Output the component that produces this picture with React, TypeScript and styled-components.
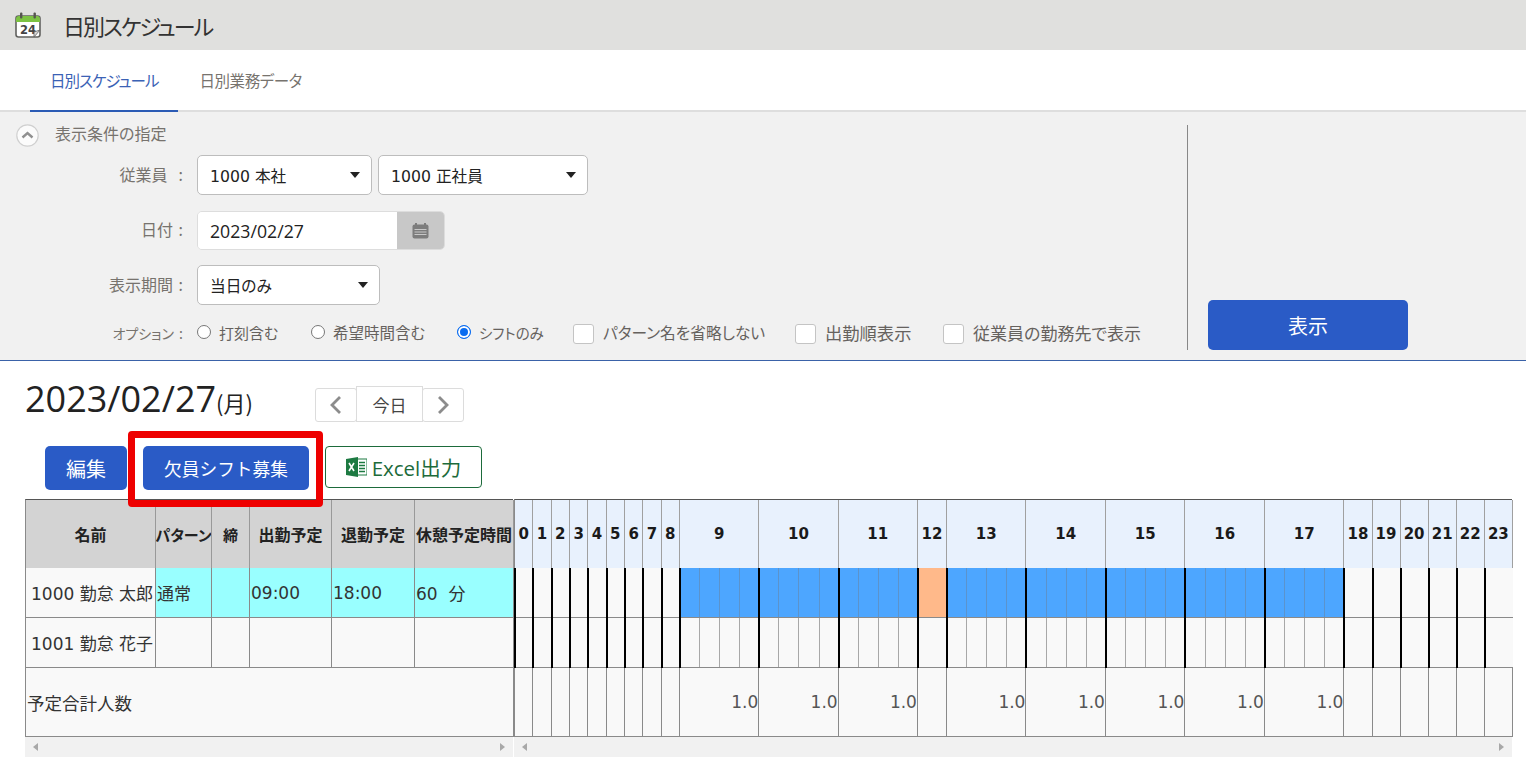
import React from "react";
import styled, { createGlobalStyle } from "styled-components";

const CJK = `"Noto Sans CJK JP", "Noto Sans", sans-serif`;
const UI = `"Open Sans", ${CJK}`;
const WIDE = `"DejaVu Sans", ${CJK}`;

const Global = createGlobalStyle`
  * { box-sizing: border-box; }
  html, body { margin: 0; padding: 0; background: #fff; overflow: hidden; }
  body { font-family: ${UI}; font-feature-settings: "palt"; color: #222; width: 1526px; height: 765px; }
`;

const Page = styled.div`
  width: 1526px;
  height: 765px;
  overflow: hidden;
`;

const TitleBar = styled.header`
  height: 50px;
  background: #e0e0de;
  display: flex;
  align-items: center;
  padding-left: 15px;
  gap: 22px;
`;
const PageTitle = styled.h1`
  margin: 0;
  font-size: 22px;
  font-weight: 400;
  color: #333;
  font-family: ${CJK};
  letter-spacing: -2px;
`;

const Tabs = styled.nav`
  height: 62px;
  display: flex;
  padding-left: 30px;
  border-bottom: 2px solid #dedede;
`;
const Tab = styled.div<{ $active?: boolean }>`
  height: 62px;
  padding: 0 ${(p) => (p.$active ? 20 : 21)}px;
  display: flex;
  align-items: center;
  font-size: 15.5px;
  font-family: ${CJK};
  letter-spacing: ${(p) => (p.$active ? "-1px" : "-0.4px")};
  color: ${(p) => (p.$active ? "#3b62b5" : "#77736e")};
  border-bottom: 2px solid ${(p) => (p.$active ? "#2b5bb5" : "transparent")};
`;

const Panel = styled.section`
  height: 249px;
  background: #f1f1f1;
  border-bottom: 1px solid #3a62a8;
  display: flex;
`;
const Form = styled.div`
  width: 1187px;
  padding-top: 12px;
  display: flex;
  flex-direction: column;
`;
const Side = styled.div`
  margin: 13px 0 10px;
  border-left: 1px solid #888;
  padding-left: 20px;
  display: flex;
  align-items: flex-end;
`;
const ShowButton = styled.button`
  width: 200px;
  height: 50px;
  border: none;
  border-radius: 5px;
  background: #2a5bc6;
  color: #fff;
  font-size: 20px;
  font-family: ${CJK};
  padding: 0;
`;
const FoldRow = styled.div`
  height: 23px;
  display: flex;
  align-items: center;
  padding-left: 16px;
  gap: 16px;
  font-size: 16px;
  font-family: ${CJK};
  color: #77736e;
  margin-bottom: 8px;
`;
const FoldText = styled.span`
  padding-bottom: 5px;
`;
const FieldRow = styled.div<{ $h: number; $mb: number }>`
  height: ${(p) => p.$h}px;
  margin-bottom: ${(p) => p.$mb}px;
  display: flex;
  align-items: center;
  gap: 6px;
`;
const FieldLabel = styled.div`
  width: 191px;
  padding: 0 8px 3px 0;
  text-align: right;
  font-size: 16px;
  font-family: ${CJK};
  color: #77736e;
  white-space: pre;
  word-spacing: 2px;
`;
const SelectBox = styled.div<{ $w: number }>`
  width: ${(p) => p.$w}px;
  height: 40px;
  background: #fff;
  border: 1px solid #bdbdbd;
  border-radius: 5px;
  display: flex;
  align-items: center;
  justify-content: space-between;
  padding: 0 11px 0 12px;
  font-size: 15.7px;
  font-family: ${WIDE};
  color: #222;
`;
const Caret = styled.span`
  width: 0;
  height: 0;
  border-left: 5px solid transparent;
  border-right: 5px solid transparent;
  border-top: 6px solid #222;
`;
const DateField = styled.div`
  width: 248px;
  height: 39px;
  display: flex;
  border: 1px solid #ddd;
  border-radius: 5px;
  overflow: hidden;
`;
const DateInput = styled.div`
  flex: 1;
  background: #fff;
  display: flex;
  align-items: center;
  padding-left: 12px;
  font-size: 17.7px;
  color: #222;
`;
const DateButton = styled.div`
  width: 47px;
  background: #c8c8c8;
  display: flex;
  align-items: center;
  justify-content: center;
`;
const Options = styled.div`
  display: flex;
  align-items: center;
  height: 24px;
`;
const OptionLabel = styled(FieldLabel)`
  width: 197px;
  padding-right: 14px;
  font-size: 14px;
`;
const Option = styled.div<{ $w: number; $fs?: number }>`
  width: ${(p) => p.$w}px;
  display: flex;
  align-items: center;
  font-size: ${(p) => p.$fs ?? 15.5}px;
  font-family: ${CJK};
  color: #66625e;
  white-space: nowrap;
`;
const OptionText = styled.span`
  padding-bottom: 4px;
`;
const RadioMark = styled.span<{ $on?: boolean }>`
  width: 14px;
  height: 14px;
  border-radius: 50%;
  margin: -5px 8px 0 0;
  flex: none;
  background: ${(p) => (p.$on ? "#0a6cf0" : "#fff")};
  border: 1px solid ${(p) => (p.$on ? "#0a6cf0" : "#777")};
  box-shadow: ${(p) => (p.$on ? "inset 0 0 0 2px #fff" : "none")};
`;
const CheckMark = styled.span`
  width: 21px;
  height: 20px;
  margin-right: 9px;
  flex: none;
  background: #fff;
  border: 1px solid #c4c4c4;
  border-radius: 3px;
`;

const DateRow = styled.div`
  margin: 25px 0 24px 25px;
  height: 36px;
  display: flex;
  align-items: center;
`;
const BigDate = styled.div`
  width: 290px;
  font-size: 36px;
  line-height: 36px;
  color: #222;
  white-space: nowrap;
  padding-bottom: 7px;
`;
const Weekday = styled.span`
  font-size: 22px;
  font-family: ${CJK};
`;
const Pager = styled.div`
  display: flex;
  align-items: flex-end;
  height: 36px;
`;
const PagerArrow = styled.div`
  width: 42px;
  height: 34px;
  background: #fff;
  border: 1px solid #dcdcdc;
  border-radius: 3px;
  display: flex;
  align-items: center;
  justify-content: center;
`;
const PagerToday = styled.div`
  width: 67px;
  height: 36px;
  margin: 0 -1px;
  background: #fff;
  border: 1px solid #dcdcdc;
  display: flex;
  align-items: center;
  justify-content: center;
  font-size: 17px;
  font-family: ${CJK};
  color: #444;
`;

const ActionBar = styled.div`
  position: relative;
  height: 44px;
  padding-left: 45px;
  display: flex;
  gap: 16px;
`;
const BlueButton = styled.button<{ $w: number; $fs: number }>`
  width: ${(p) => p.$w}px;
  height: 44px;
  border: none;
  border-radius: 5px;
  background: #2a5bc6;
  color: #fff;
  font-size: ${(p) => p.$fs}px;
  font-family: ${CJK};
  padding: 0;
`;
const ExcelButton = styled.button`
  width: 157px;
  height: 42px;
  border: 1px solid #1d6b3b;
  border-radius: 4px;
  background: #fff;
  color: #1d6b3b;
  font-size: 20.5px;
  font-family: ${UI};
  display: flex;
  align-items: center;
  justify-content: center;
  gap: 5px;
  padding: 0;
`;
const Highlight = styled.div`
  position: absolute;
  left: 128px;
  top: -15px;
  width: 195px;
  height: 76px;
  border: 7px solid #ee0000;
  border-radius: 4px;
  z-index: 3;
`;

const TableArea = styled.div`
  margin-top: 9px;
  padding-left: 25px;
  display: flex;
  gap: 1px;
`;
const Pane = styled.div<{ $w: number }>`
  width: ${(p) => p.$w}px;
`;
const LeftGrid = styled.div`
  display: grid;
  grid-template-columns: 130px 56px 38px 82px 83px 99px;
  grid-template-rows: 68px 50px 50px 69px;
  border-top: 1px solid #555;
  border-left: 1px solid #8a8a8a;
`;
const HeadCell = styled.div<{ $fs?: number }>`
  background: #d3d3d3;
  border-right: 1px solid #999;
  display: flex;
  align-items: center;
  justify-content: center;
  font-size: ${(p) => p.$fs ?? 16}px;
  font-weight: 700;
  font-family: ${CJK};
  color: #222;
  white-space: nowrap;
  overflow: hidden;
`;
const BodyCell = styled.div<{ $cyan?: boolean; $pad?: number }>`
  background: ${(p) => (p.$cyan ? "#99ffff" : "#f9f9f9")};
  border-right: 1px solid #8a8a8a;
  border-bottom: 1px solid #8a8a8a;
  display: flex;
  align-items: center;
  padding-left: ${(p) => p.$pad ?? 1}px;
  font-size: 17px;
  font-family: ${WIDE};
  color: #333;
  white-space: nowrap;
  overflow: hidden;
`;
const TotalCell = styled(BodyCell)`
  grid-column: 1 / -1;
  font-size: 17.5px;
`;

const TIMELINE_COLS =
  "repeat(9, 18.33px) repeat(3, 79.34px) 29px repeat(5, 79.5px) repeat(6, 28.08px)";
const TimeGrid = styled.div`
  display: grid;
  grid-template-columns: ${TIMELINE_COLS};
  grid-template-rows: 68px 50px 50px 69px;
  border-top: 1px solid #555;
  border-left: 1px solid #8a8a8a;
`;
const HourHead = styled.div`
  background: #e8f1fd;
  border-right: 1px solid #a0a0a0;
  display: flex;
  align-items: center;
  justify-content: center;
  font-size: 15px;
  font-weight: 700;
  font-family: "DejaVu Sans", sans-serif;
  color: #1a1a1a;
`;
const HourCell = styled.div<{ $fill?: "work" | "break" }>`
  position: relative;
  background: ${(p) => (p.$fill === "work" ? "#4da6ff" : p.$fill === "break" ? "#ffb98a" : "#f9f9f9")};
  border-bottom: 1px solid #8a8a8a;
  display: flex;
  &::before {
    content: "";
    position: absolute;
    left: -1px;
    top: 0;
    bottom: -1px;
    width: 2px;
    background: #000;
    z-index: 1;
  }
`;
const Quarter = styled.span<{ $fill?: boolean }>`
  flex: 1;
  border-right: 1px solid ${(p) => (p.$fill ? "#5b93cc" : "#a8a8a8")};
  &:last-child {
    border-right: none;
  }
`;
const TotalHour = styled.div`
  background: #f9f9f9;
  border-right: 1px solid #8a8a8a;
  border-bottom: 1px solid #8a8a8a;
  display: flex;
  align-items: center;
  justify-content: flex-end;
  font-size: 17px;
  font-family: "DejaVu Sans", sans-serif;
  color: #555;
`;
const ScrollTrack = styled.div`
  height: 20px;
  background: #f1f1f1;
  display: flex;
  align-items: center;
  justify-content: space-between;
  padding: 0 8px;
`;
const ScrollArrow = styled.span<{ $right?: boolean }>`
  width: 0;
  height: 0;
  border-top: 4.5px solid transparent;
  border-bottom: 4.5px solid transparent;
  ${(p) => (p.$right ? "border-left: 5px solid #a8a8a8;" : "border-right: 5px solid #a8a8a8;")}
`;

const AppIcon = () => (
  <svg width="26" height="26" viewBox="0 0 26 26">
    <rect x="1" y="4" width="24" height="21" rx="2.5" fill="#fff" stroke="#62625f" strokeWidth="1.6" />
    <path d="M1 7a3 3 0 0 1 3-3h18a3 3 0 0 1 3 3v3H1z" fill="#7cc242" />
    <rect x="5" y="0.5" width="2.4" height="6" rx="1" fill="#55554f" />
    <rect x="18.5" y="0.5" width="2.4" height="6" rx="1" fill="#55554f" />
    <text x="5" y="21.5" fontSize="11.5" fontWeight="700" fontFamily="DejaVu Sans, sans-serif" fill="#444">24</text>
    <path d="M25 18l-6 7v-5z" fill="#d8d8d8" stroke="#62625f" strokeWidth="0.8" />
  </svg>
);
const FoldIcon = () => (
  <svg width="23" height="23" viewBox="0 0 23 23">
    <circle cx="11.5" cy="11.5" r="10.7" fill="#fbfbfb" stroke="#d0d0d0" strokeWidth="1.2" />
    <path d="M6.5 13.5l5-4.5 5 4.5" fill="none" stroke="#8f8f8f" strokeWidth="2.4" />
  </svg>
);
const CalIcon = () => (
  <svg width="17" height="16" viewBox="0 0 17 16">
    <rect x="0.5" y="1.5" width="16" height="14" rx="2" fill="#7d7d7d" />
    <rect x="3" y="0" width="2" height="3" fill="#7d7d7d" />
    <rect x="12" y="0" width="2" height="3" fill="#7d7d7d" />
    <path d="M2.5 6.5h12M2.5 9h12M2.5 11.5h12" stroke="#c8c8c8" strokeWidth="1" />
  </svg>
);
const Chevron = ({ right }: { right?: boolean }) => (
  <svg width="12" height="20" viewBox="0 0 12 20">
    <path d={right ? "M2 2l8 8-8 8" : "M10 2l-8 8 8 8"} fill="none" stroke="#8c8c8c" strokeWidth="2.8" />
  </svg>
);
const ExcelIcon = () => (
  <svg width="21" height="20" viewBox="0 0 21 20">
    <rect x="9" y="2" width="12" height="16" fill="#fff" stroke="#1d7a42" strokeWidth="1" />
    <path d="M13 5.5h6M13 8.5h6M13 11.5h6M13 14.5h6" stroke="#1d7a42" strokeWidth="1.6" />
    <path d="M0 2l12-2v20L0 18z" fill="#1d7a42" />
    <path d="M3 6l5 8M8 6l-5 8" stroke="#fff" strokeWidth="1.6" />
  </svg>
);

const hours = Array.from({ length: 24 }, (_, i) => i);
const isWide = (h: number) => h >= 9 && h <= 17 && h !== 12;

const Ticks = ({ fill }: { fill?: boolean }) => (
  <>
    {[0, 1, 2, 3].map((q) => (
      <Quarter key={q} $fill={fill} />
    ))}
  </>
);

export default function App() {
  return (
    <Page>
      <Global />
      <TitleBar>
        <AppIcon />
        <PageTitle>日別スケジュール</PageTitle>
      </TitleBar>
      <Tabs>
        <Tab $active>日別スケジュール</Tab>
        <Tab>日別業務データ</Tab>
      </Tabs>
      <Panel>
        <Form>
          <FoldRow>
            <FoldIcon />
            <FoldText>表示条件の指定</FoldText>
          </FoldRow>
          <FieldRow $h={40} $mb={16}>
            <FieldLabel>{"従業員  :"}</FieldLabel>
            <SelectBox $w={175}>
              1000 本社
              <Caret />
            </SelectBox>
            <SelectBox $w={210}>
              1000 正社員
              <Caret />
            </SelectBox>
          </FieldRow>
          <FieldRow $h={39} $mb={15}>
            <FieldLabel>{"日付 :"}</FieldLabel>
            <DateField>
              <DateInput>2023/02/27</DateInput>
              <DateButton>
                <CalIcon />
              </DateButton>
            </DateField>
          </FieldRow>
          <FieldRow $h={40} $mb={17}>
            <FieldLabel>{"表示期間 :"}</FieldLabel>
            <SelectBox $w={183}>
              当日のみ
              <Caret />
            </SelectBox>
          </FieldRow>
          <Options>
            <OptionLabel>{"オプション :"}</OptionLabel>
            <Option $w={114} $fs={15}>
              <RadioMark />
              <OptionText>打刻含む</OptionText>
            </Option>
            <Option $w={146}>
              <RadioMark />
              <OptionText>希望時間含む</OptionText>
            </Option>
            <Option $w={116} $fs={14.5}>
              <RadioMark $on />
              <OptionText>シフトのみ</OptionText>
            </Option>
            <Option $w={222} $fs={15.7}>
              <CheckMark />
              <OptionText>パターン名を省略しない</OptionText>
            </Option>
            <Option $w={148} $fs={17.3}>
              <CheckMark />
              <OptionText>出勤順表示</OptionText>
            </Option>
            <Option $w={200} $fs={17}>
              <CheckMark />
              <OptionText>従業員の勤務先で表示</OptionText>
            </Option>
          </Options>
        </Form>
        <Side>
          <ShowButton>表示</ShowButton>
        </Side>
      </Panel>

      <DateRow>
        <BigDate>
          2023/02/27<Weekday>(月)</Weekday>
        </BigDate>
        <Pager>
          <PagerArrow>
            <Chevron />
          </PagerArrow>
          <PagerToday>今日</PagerToday>
          <PagerArrow>
            <Chevron right />
          </PagerArrow>
        </Pager>
      </DateRow>

      <ActionBar>
        <BlueButton $w={82} $fs={20}>編集</BlueButton>
        <BlueButton $w={166} $fs={17.7}>欠員シフト募集</BlueButton>
        <ExcelButton>
          <ExcelIcon />
          Excel出力
        </ExcelButton>
        <Highlight />
      </ActionBar>

      <TableArea>
        <Pane $w={488}>
          <LeftGrid>
            <HeadCell>名前</HeadCell>
            <HeadCell $fs={15}>パターン</HeadCell>
            <HeadCell $fs={15}>締</HeadCell>
            <HeadCell>出勤予定</HeadCell>
            <HeadCell>退勤予定</HeadCell>
            <HeadCell>休憩予定時間</HeadCell>
            <BodyCell $pad={5}>1000 勤怠 太郎</BodyCell>
            <BodyCell $cyan>通常</BodyCell>
            <BodyCell $cyan />
            <BodyCell $cyan>09:00</BodyCell>
            <BodyCell $cyan>18:00</BodyCell>
            <BodyCell $cyan>60&nbsp;&nbsp;分</BodyCell>
            <BodyCell $pad={5}>1001 勤怠 花子</BodyCell>
            <BodyCell />
            <BodyCell />
            <BodyCell />
            <BodyCell />
            <BodyCell />
            <TotalCell>予定合計人数</TotalCell>
          </LeftGrid>
          <ScrollTrack>
            <ScrollArrow />
            <ScrollArrow $right />
          </ScrollTrack>
        </Pane>
        <Pane $w={998}>
          <TimeGrid>
            {hours.map((h) => (
              <HourHead key={h}>{h}</HourHead>
            ))}
            {hours.map((h) => (
              <HourCell key={h} $fill={isWide(h) ? "work" : h === 12 ? "break" : undefined}>
                {isWide(h) && <Ticks fill />}
              </HourCell>
            ))}
            {hours.map((h) => (
              <HourCell key={h}>{isWide(h) && <Ticks />}</HourCell>
            ))}
            {hours.map((h) => (
              <TotalHour key={h}>{isWide(h) ? "1.0" : ""}</TotalHour>
            ))}
          </TimeGrid>
          <ScrollTrack>
            <ScrollArrow />
            <ScrollArrow $right />
          </ScrollTrack>
        </Pane>
      </TableArea>
    </Page>
  );
}
